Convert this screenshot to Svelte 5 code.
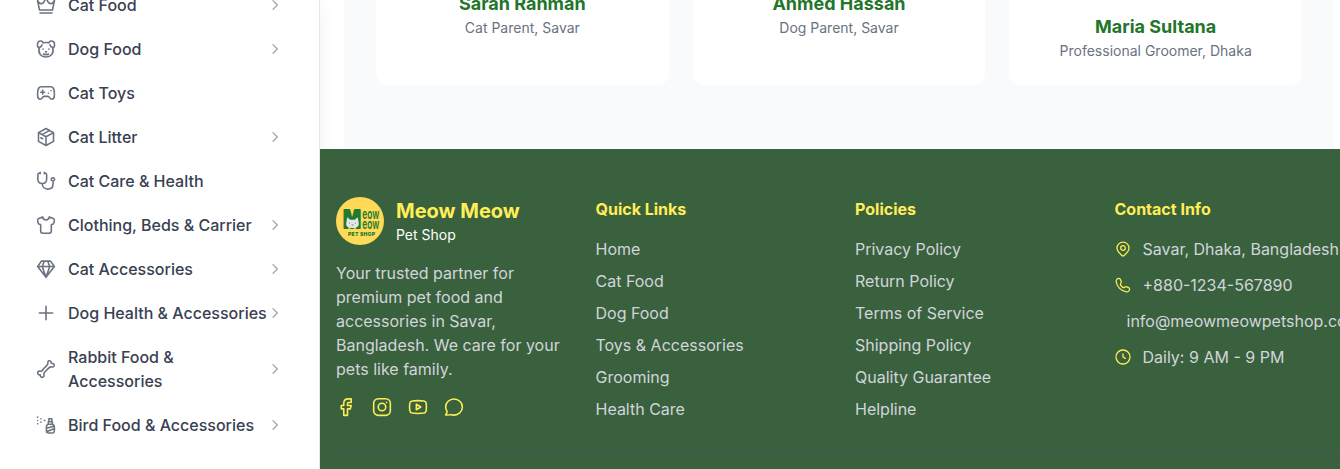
<script>
  const menu = [
    { label: 'Cat Food', icon: 'crown', more: true },
    { label: 'Dog Food', icon: 'dog', more: true },
    { label: 'Cat Toys', icon: 'game', more: false },
    { label: 'Cat Litter', icon: 'box', more: true },
    { label: 'Cat Care & Health', icon: 'steth', more: false },
    { label: 'Clothing, Beds & Carrier', icon: 'shirt', more: true },
    { label: 'Cat Accessories', icon: 'diamond', more: true },
    { label: 'Dog Health & Accessories', icon: 'plus', more: true },
    { label: 'Rabbit Food & Accessories', icon: 'bone', more: true },
    { label: 'Bird Food & Accessories', icon: 'spray', more: true }
  ];

  const icons = {
    crown: 'M4.200 18 1.800 6.500c1 2.500 2.700 4 4.600 4 2.200 0 4-2.600 5.600-8 1.600 5.400 3.400 8 5.600 8 1.900 0 3.600-1.500 4.600-4L19.800 18ZM4.800 21.600h14.400',
    dog: 'M8.600 4.600C7.500 2.300 4.800 1.600 3.100 3.200 1.300 5 1.300 8.500 2.700 10.300 5 10.200 6.800 8.500 7.200 7M15.400 4.600c1.100-2.300 3.800-3 5.500-1.400 1.800 1.800 1.800 5.300.4 7.100-2.300-.1-4.100-1.800-4.500-3.300M8.600 4.600c2.200-.5 4.600-.5 6.800 0M4 10.800c-2 6.400 2.200 10.700 8 10.700s10-4.300 8-10.700M8.500 12v.2M15.500 12v.2M11.400 15.400h1.200M9 18c1.200.9 2.300.8 3 0 .7.800 1.800.9 3 0',
    game: 'M2 15.800c-.3-4 .2-7.800 1.400-9.800.5-.9 1.700-1.500 2.700-1.500h11.800c1 0 2.200.6 2.700 1.500 1.200 2 1.700 5.800 1.400 9.800-.2 2.500-1.500 3.700-3.200 3.700-2.500 0-2-3.500-4.700-3.500H9.900c-2.700 0-2.200 3.500-4.700 3.500-1.700 0-3-1.200-3.200-3.700ZM5.700 11h4.600M8 8.700v4.600M14.800 12.200v.1M18 9v.1',
    box: 'M12 1.800 21 6.700v10.600L12 22.200l-9-4.900V6.700ZM3 6.700l9 5 9-5M12 11.700v10.500M7.200 9.100l9.200-5M5.800 12.900l2.200 1.200',
    steth: 'M5 2.300c-1.800 0-2.800.7-2.800 2.500v4.700c0 3.200 2.200 5.500 5.300 5.500s5.300-2.300 5.300-5.500V4.800c0-1.800-1-2.500-2.800-2.500M7.500 15c0 4 2.700 6.700 6.500 6.700s6.500-2.400 6.500-6.200V12M5 1.500v1.700M10 1.500v1.700M20.300 12a2 2 0 1 0 0-4 2 2 0 0 0 0 4Z',
    shirt: 'M8 2.300 3.300 4.100c-1.200.5-1.500 1.300-1.300 2.700l.6 3c.2 1.200.9 1.500 3 1.500v7.500c0 2.300.5 3 2.700 3h7.400c2.200 0 2.700-.7 2.700-3v-7.500c2.100 0 2.800-.3 3-1.500l.6-3c.2-1.400-.1-2.200-1.300-2.700L16 2.300c-.4 2.200-1.700 3.700-4 3.700S8.400 4.500 8 2.300Z',
    diamond: 'M6.500 2.500h11L22 9 12 22 2 9ZM2 9h20M10 2.500 7.500 9 12 22l4.500-13L14 2.500',
    plus: 'M12 4v16M4 12h16',
    bone: 'm8.800 12 3.700-3.800c1.900-1.800 2.200-2 1.800-3.800-.3-1.800 1.400-2.800 2.800-2.100.9.400 1.400 1.400 1.300 2.900 2.200-.2 3.700.9 3.500 2.600-.2 1.700-1.700 2.200-3.600 1.700-1.200-.3-1.600 0-3.100 1.400l-4.400 4.400c-1.500 1.500-1.800 1.900-1.400 3.200.5 1.900-.1 3.400-1.800 3.500-1.600.1-2.600-1.200-2.600-3-1.900.1-3.100-.9-3-2.500.1-1.700 1.700-2.400 3.400-1.900 1.400.4 1.900.1 3.400-2.600Z',
    spray: 'M13.500 12c-.7.5-1 1.200-1 2v5.500c0 1.500.5 2 2 2H20c1.500 0 2-.5 2-2V14c0-.8-.3-1.500-1-2l-1.300-1h-5ZM14.700 11V8h5v3M15.500 8V4.500h3.500V8M12.500 16l9-2.500M12.500 20l9-3.500M2 2.500v.1M2 6.500v.1M2 10.500v.1M6 4.500v.1M6 8.500v.1M10 6.500h.6',
    facebook: 'M6.300 10.200v4h3V22h4.500v-7.800h3.400l1-4h-4.400V7.600c0-.7.500-1.100 1.200-1.100h3.200V2.200h-3.400c-3.300 0-5.500 2.200-5.500 5.400v2.600Z',
    instagram: 'M7.500 2h9A5.500 5.500 0 0 1 22 7.500v9a5.500 5.500 0 0 1-5.500 5.500h-9A5.500 5.500 0 0 1 2 16.500v-9A5.500 5.500 0 0 1 7.500 2ZM12 16.500a4.500 4.500 0 1 0 0-9 4.500 4.500 0 0 0 0 9ZM17.500 6.400v.2',
    youtube: 'M12 4.300c2.500 0 4.900.1 7 .5 1.600.3 2.700 1.400 2.900 3 .3 2.600.3 5.600 0 8.400-.2 1.600-1.300 2.700-2.900 3-4.500.7-9.500.7-14 0-1.600-.3-2.700-1.400-2.900-3-.3-2.800-.3-5.800 0-8.400.2-1.600 1.300-2.700 2.900-3 2.100-.4 4.500-.5 7-.5ZM10 8.700v6.600l5.300-3.300Z',
    chat: 'M12 21.700c5.500 0 10-4.300 10-9.700S17.500 2.300 12 2.300 2 6.600 2 12c0 1.800.5 3.300 1.400 4.700.4.600.4 1.100.1 1.700L2 21.700l5-.5c.6-.1.900 0 1.500.1 1.100.3 2.300.4 3.500.4Z',
    pin: 'M12 22.500c-.6 0-1.100-.2-1.600-.7C7 18.600 3 15.600 3 10.500 3 5.500 7 1.800 12 1.800s9 3.700 9 8.700c0 5.100-4 8.100-7.400 11.300-.5.500-1 .7-1.600.7ZM12 14a3.500 3.500 0 1 0 0-7 3.500 3.500 0 0 0 0 7Z',
    phone: 'M9.200 6.300 8.500 4.500C7.900 3 7.700 2.100 6 2.100c-2.500 0-4.500 2.200-4.200 4.700.8 7.800 7.600 14.600 15.400 15.400 2.500.3 4.700-1.700 4.700-4.200 0-1.700-.9-1.900-2.400-2.500l-1.800-.7c-1.500-.6-2-.4-3.200.6-1 .8-1.600.8-2.800.1-1.500-.9-2.300-1.700-3.200-3.200-.7-1.200-.7-1.800.1-2.800 1-1.200 1.200-1.700.6-3.200Z',
    clock: 'M12 22.500a10.500 10.500 0 1 0 0-21 10.500 10.500 0 0 0 0 21ZM12 7.500V12l3.500 2',
    chevron: 'm9 5.500 6.500 6.500L9 18.500'
  };

  const reviews = [
    { name: 'Sarah Rahman', role: 'Cat Parent, Savar' },
    { name: 'Ahmed Hassan', role: 'Dog Parent, Savar' },
    { name: 'Maria Sultana', role: 'Professional Groomer, Dhaka' }
  ];

  const columns = [
    { title: 'Quick Links', links: ['Home', 'Cat Food', 'Dog Food', 'Toys & Accessories', 'Grooming', 'Health Care'] },
    { title: 'Policies', links: ['Privacy Policy', 'Return Policy', 'Terms of Service', 'Shipping Policy', 'Quality Guarantee', 'Helpline'] }
  ];

  const contacts = [
    { icon: 'pin', text: 'Savar, Dhaka, Bangladesh' },
    { icon: 'phone', text: '+880-1234-567890' },
    { icon: null, text: 'info@meowmeowpetshop.com' },
    { icon: 'clock', text: 'Daily: 9 AM - 9 PM' }
  ];
</script>

{#snippet glyph(name, size)}
  <svg class="glyph" width={size} height={size} viewBox="0 0 24 24" aria-hidden="true"><path d={icons[name]} /></svg>
{/snippet}

<div class="page">
  <aside>
    <nav>
      {#each menu as item}
        <a class="item" href="#top">
          {@render glyph(item.icon, 20)}
          <span class="label">{item.label}</span>
          {#if item.more}<span class="chevron">{@render glyph('chevron', 16)}</span>{/if}
        </a>
      {/each}
    </nav>
  </aside>

  <main>
    <section class="reviews">
      {#each reviews as r, i}
        <article class:long={i === 2}>
          <h4>{r.name}</h4>
          <p>{r.role}</p>
        </article>
      {/each}
    </section>

    <footer>
      <div class="grid">
        <div>
          <div class="brand">
            <svg class="logo" width="48" height="48" viewBox="0 0 48 48">
              <circle cx="24" cy="24" r="24" fill="#ffda58" />
              <g fill="#217a32" font-family="Inter, sans-serif" font-weight="900">
                <text x="7.300" y="30.800" font-size="24" font-weight="800" textLength="17.500" lengthAdjust="spacingAndGlyphs" stroke="#217a32" stroke-width="2.200" stroke-linejoin="round">M</text>
                <text x="26.300" y="22.400" font-size="14" font-weight="600" textLength="17" lengthAdjust="spacingAndGlyphs">eow</text>
                <text x="26.300" y="32.200" font-size="14" font-weight="600" textLength="17" lengthAdjust="spacingAndGlyphs">eow</text>
                <text x="12" y="38.900" font-size="5" textLength="27">PET SHOP</text>
              </g>
              <path d="M11.200 20.200l3 2.500h4.600l3-2.500 1 6.300c.2 3-2 4.500-6.300 4.500s-6.500-1.500-6.300-4.500Z" fill="#e4e8e4" />
              <path d="M13.500 25.700v.8M19.300 25.700v.8M15.600 28h1.800" stroke="#58705c" stroke-width=".9" />
            </svg>
            <div>
              <h3>Meow Meow</h3>
              <p>Pet Shop</p>
            </div>
          </div>
          <p class="about">Your trusted partner for premium pet food and accessories in Savar, Bangladesh. We care for your pets like family.</p>
          <div class="social">
            {#each ['facebook', 'instagram', 'youtube', 'chat'] as s}{@render glyph(s, 20)}{/each}
          </div>
        </div>
        {#each columns as c}
          <div>
            <h4>{c.title}</h4>
            <ul>
              {#each c.links as l}<li>{l}</li>{/each}
            </ul>
          </div>
        {/each}
        <div>
          <h4>Contact Info</h4>
          <ul class="contact">
            {#each contacts as c}
              <li>
                {#if c.icon}{@render glyph(c.icon, 16)}{:else}<span></span>{/if}
                <span>{c.text}</span>
              </li>
            {/each}
          </ul>
        </div>
      </div>
      <div class="rule"></div>
    </footer>
  </main>
</div>

<style>
  :global(body) { margin: 0; overflow: hidden; background: #fff; }
  .page { display: flex; width: 1340px; height: 469px; overflow: hidden; font: 400 16px/24px Inter, sans-serif; }
  h3, h4, p, ul { margin: 0; padding: 0; list-style: none; }
  .glyph { display: block; flex: none; fill: none; stroke: currentColor; stroke-width: 1.9; stroke-linecap: round; stroke-linejoin: round; }

  aside { flex: none; box-sizing: border-box; width: 320px; height: 469px; border-right: 1px solid #e5e7eb; background: #fff; box-shadow: 0 0 20px -3px rgba(0, 0, 0, .07); }
  nav { display: flex; flex-direction: column; gap: 4px; margin-top: -15px; padding: 0 24px; }
  .item { display: flex; align-items: center; gap: 12px; padding: 8px 12px; color: #6b7280; text-decoration: none; }
  .label { flex: 1; margin-right: -12px; color: #374151; font-weight: 500; }
  .chevron { color: #9ca3af; }

  main { display: flex; flex-direction: column; flex: none; width: 1038px; height: 469px; }
  .reviews { display: grid; grid-template-columns: repeat(3, 1fr); gap: 24px; box-sizing: border-box; width: 990px; height: 149px; margin-left: 24px; padding: 0 32px 64px; background: #f9fafb; }
  article { border-radius: 0 0 12px 12px; background: #fff; text-align: center; }
  article h4 { margin-top: -10px; color: #23752b; font-size: 18px; line-height: 28px; font-weight: 700; }
  article.long h4 { margin-top: 13px; }
  article p { color: #6b7280; font-size: 14px; line-height: 20px; }

  footer { flex: 1; position: relative; padding: 48px 16px 0; background: #3a613d; color: #d1d5db; }
  .grid { display: grid; grid-template-columns: repeat(4, 227.5px); gap: 32px; }
  .brand { display: flex; gap: 12px; margin-bottom: 16px; }
  .brand h3 { color: #ffee58; font-size: 20px; line-height: 28px; font-weight: 700; }
  .brand p { color: #fff; font-size: 14px; line-height: 20px; }
  .logo { display: block; }
  .social { display: flex; gap: 16px; margin-top: 16px; color: #ffee58; }
  footer h4 { margin-bottom: 16px; color: #ffee58; font-size: 16px; font-weight: 700; }
  footer ul { display: flex; flex-direction: column; gap: 8px; }
  footer .contact { gap: 12px; }
  .contact li { display: flex; align-items: center; gap: 12px; white-space: nowrap; }
  .contact .glyph { color: #ffee58; }
  .rule { margin-top: 32px; border-top: 1px solid #4b5563; }
</style>
